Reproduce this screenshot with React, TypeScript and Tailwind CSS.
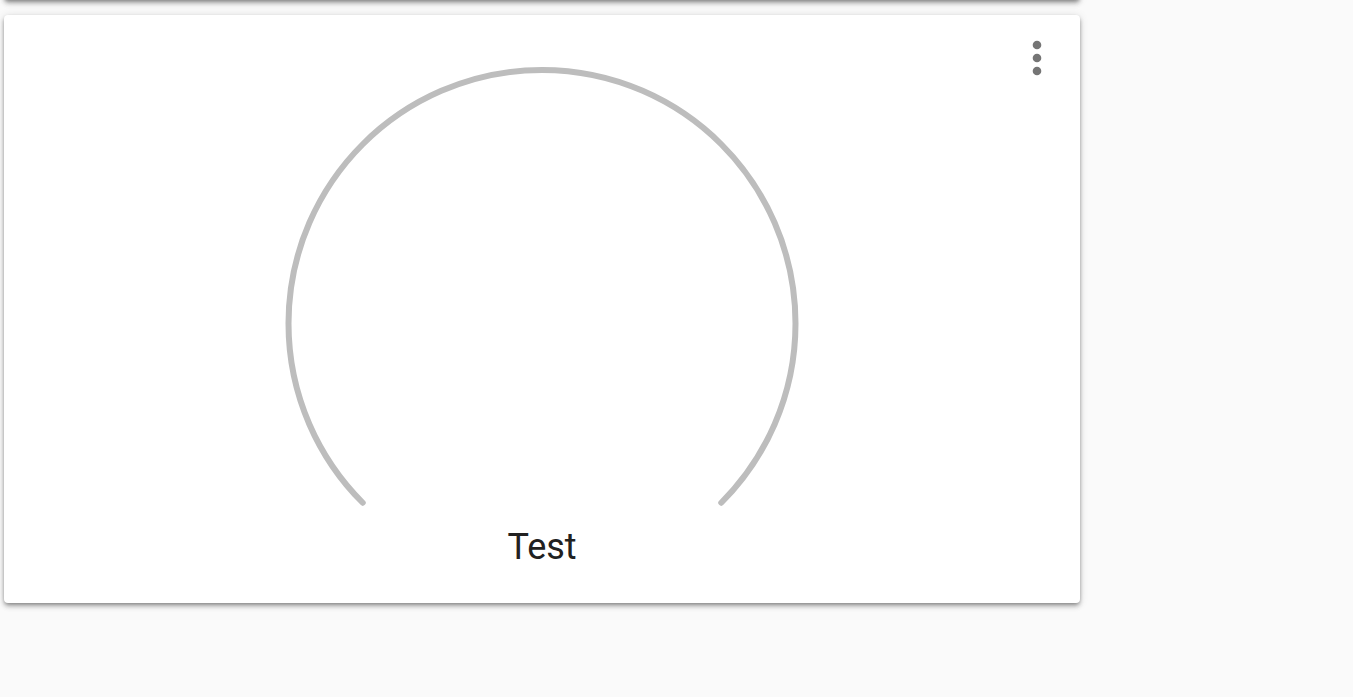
import React from "react";

const shadow =
  "shadow-[0_4px_5px_0_rgba(0,0,0,0.14),0_1px_10px_0_rgba(0,0,0,0.12),0_2px_4px_-1px_rgba(0,0,0,0.4)]";

function Gauge() {
  const cx = 260;
  const cy = 258.5;
  const r = 253.5;
  const a1 = (135 * Math.PI) / 180;
  const a2 = (45 * Math.PI) / 180;
  const x1 = cx + r * Math.cos(a1);
  const y1 = cy + r * Math.sin(a1);
  const x2 = cx + r * Math.cos(a2);
  const y2 = cy + r * Math.sin(a2);
  return (
    <svg width="520" height="445" viewBox="0 0 520 445" className="block">
      <path
        d={`M ${x1} ${y1} A ${r} ${r} 0 1 1 ${x2} ${y2}`}
        fill="none"
        stroke="#bdbdbd"
        strokeWidth="6"
        strokeLinecap="round"
      />
    </svg>
  );
}

export default function App() {
  return (
    <div className="min-h-screen w-full bg-[#fafafa] overflow-hidden font-['Roboto',sans-serif]">
      <div className="w-[1076px] ml-[4px] flex flex-col gap-[15px]">
        <div className={`h-[200px] -mt-[200px] bg-white rounded-[4px] ${shadow}`} />
        <div className={`relative h-[588px] bg-white rounded-[4px] ${shadow} flex flex-col items-center`}>
          <div className="mt-[50px]">
            <Gauge />
          </div>
          <div className="mt-[19px] text-[36px] leading-none text-[#212121]">Test</div>
          <button className="absolute top-[17px] right-[30px] w-[26px] h-[52px] flex items-center justify-center">
            <svg width="26" height="52" viewBox="0 0 26 52">
              <circle cx="13" cy="13" r="4.3" fill="#757575" />
              <circle cx="13" cy="26" r="4.3" fill="#757575" />
              <circle cx="13" cy="39" r="4.3" fill="#757575" />
            </svg>
          </button>
        </div>
      </div>
    </div>
  );
}
